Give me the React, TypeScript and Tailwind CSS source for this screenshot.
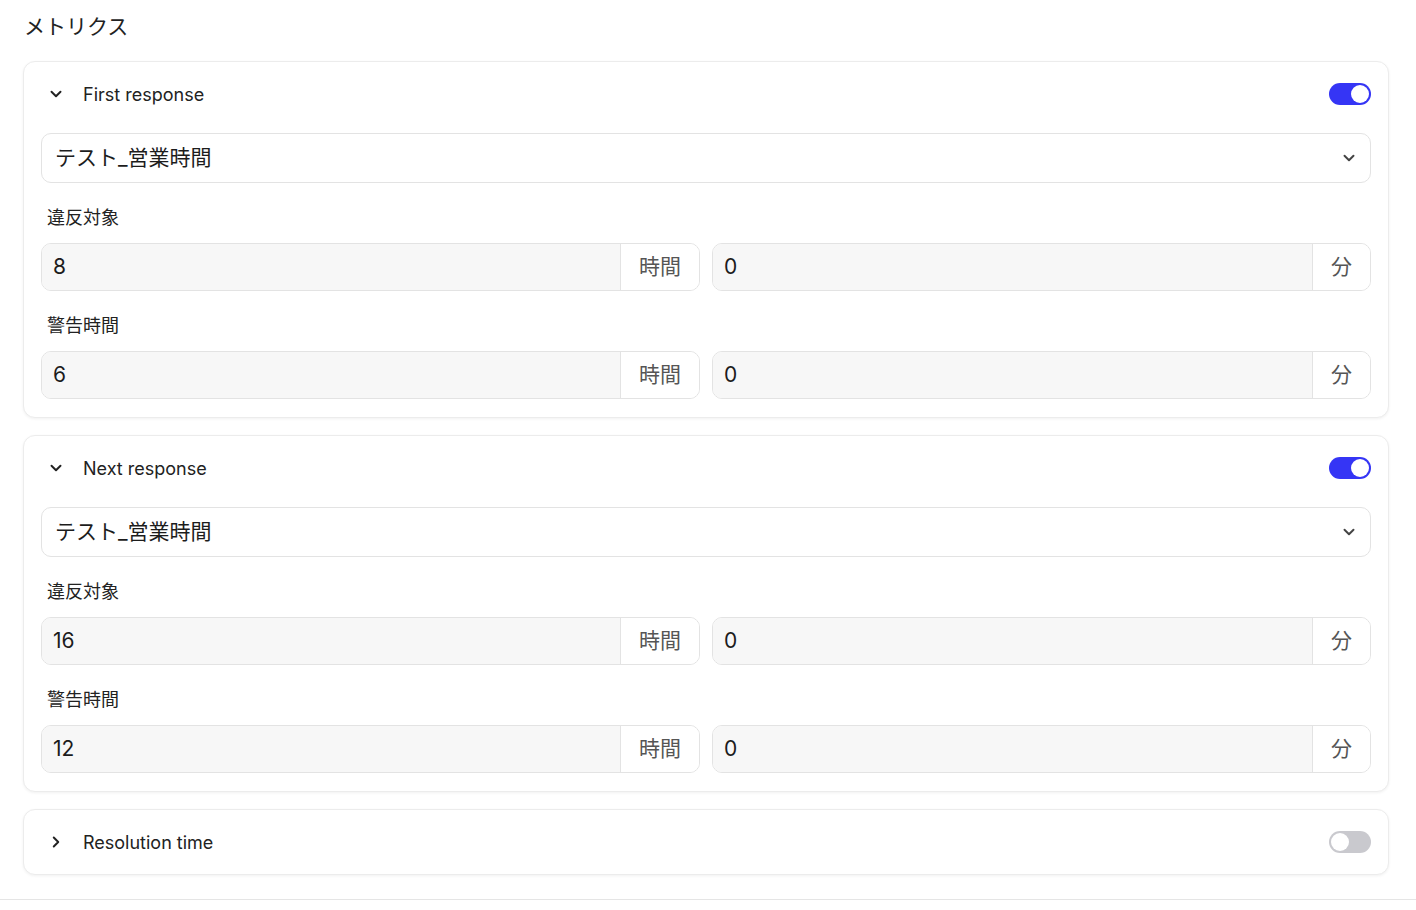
import React from "react";

const font = { fontFamily: 'Inter, "Noto Sans CJK JP", sans-serif' };

function ChevronDown({ className = "", size = 18 }: { className?: string; size?: number }) {
  return (
    <svg width={size} height={size} viewBox="0 0 24 24" fill="none" stroke="currentColor" strokeWidth="2.6" strokeLinecap="round" strokeLinejoin="round" className={className}>
      <path d="m6 9 6 6 6-6" />
    </svg>
  );
}
function ChevronRight({ className = "", size = 18 }: { className?: string; size?: number }) {
  return (
    <svg width={size} height={size} viewBox="0 0 24 24" fill="none" stroke="currentColor" strokeWidth="2.6" strokeLinecap="round" strokeLinejoin="round" className={className}>
      <path d="m9 18 6-6-6-6" />
    </svg>
  );
}

function Toggle({ on }: { on: boolean }) {
  return (
    <div className={`w-[42px] h-[22px] rounded-full flex items-center px-[2px] ${on ? "bg-[#3535f5] justify-end" : "bg-[#c9c9ce] justify-start"}`}>
      <div className="w-[18px] h-[18px] rounded-full bg-white" />
    </div>
  );
}

function InputGroup({ value, unit }: { value: string; unit: string }) {
  return (
    <div className="flex-1 flex h-[48px] rounded-[10px] border border-[#e3e3e3] overflow-hidden">
      <div className="flex-1 bg-[#f7f7f7] flex items-center px-[11px] text-[21px] text-[#1c1c1c]">{value}</div>
      <div className="bg-white border-l border-[#e3e3e3] flex items-center px-[18px] text-[21px] text-[#555]">{unit}</div>
    </div>
  );
}

function Card({ title, open, on, v1, v2 }: { title: string; open: boolean; on: boolean; v1?: string; v2?: string }) {
  return (
    <div className="bg-white border border-[#ececec] rounded-[12px] shadow-[0_1px_3px_rgba(0,0,0,0.06)]">
      <div className="h-[64px] flex items-center px-[17px]">
        <div className="w-[30px] flex justify-center text-[#222]">
          {open ? <ChevronDown /> : <ChevronRight />}
        </div>
        <div className="ml-[12px] text-[18px] text-[#222] flex-1">{title}</div>
        <Toggle on={on} />
      </div>
      {open && (
        <div className="px-[17px] pb-[18px] pt-[7px]">
          <div className="h-[50px] rounded-[10px] border border-[#e3e3e3] flex items-center pl-[13px] pr-[12px]">
            <div className="flex-1 text-[21px] text-[#1c1c1c]">テスト_営業時間</div>
            <ChevronDown className="text-[#444]" size={18} />
          </div>
          <div className="mt-[23px] mb-[13px] px-[6px] h-[24px] leading-[24px] text-[18px] text-[#222]">違反対象</div>
          <div className="flex gap-[12px]">
            <InputGroup value={v1 ?? ""} unit="時間" />
            <InputGroup value="0" unit="分" />
          </div>
          <div className="mt-[23px] mb-[13px] px-[6px] h-[24px] leading-[24px] text-[18px] text-[#222]">警告時間</div>
          <div className="flex gap-[12px]">
            <InputGroup value={v2 ?? ""} unit="時間" />
            <InputGroup value="0" unit="分" />
          </div>
        </div>
      )}
    </div>
  );
}

export default function App() {
  return (
    <div style={font} className="bg-white min-h-[910px]">
      <div className="border-b border-[#e5e5e5] pb-[24px]">
        <div className="px-[24px] pt-[13px] h-[61px] text-[21px] text-[#222] leading-[28px]">メトリクス</div>
        <div className="pl-[23px] pr-[27px] flex flex-col gap-[17px]">
          <Card title="First response" open on v1="8" v2="6" />
          <Card title="Next response" open on v1="16" v2="12" />
          <Card title="Resolution time" open={false} on={false} />
        </div>
      </div>
    </div>
  );
}
